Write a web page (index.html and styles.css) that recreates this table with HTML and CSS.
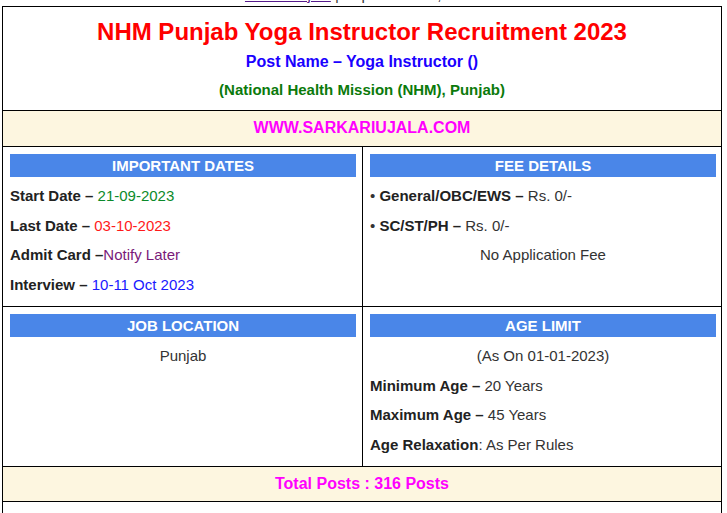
FILE: index.html
```html
<!DOCTYPE html>
<html>
<head>
<meta charset="utf-8">
<link rel="stylesheet" href="styles.css">
</head>
<body>
<div class="page">
  <div class="meta"><a href="#" class="meta-link">Sarkari Ujala</a> | September 20, 2023</div>
  <div class="grid">
    <div class="cell span head">
      <div class="title">NHM Punjab Yoga Instructor Recruitment 2023</div>
      <div class="subtitle">Post Name – Yoga Instructor ()</div>
      <div class="org">(National Health Mission (NHM), Punjab)</div>
    </div>
    <div class="cell span band site">WWW.SARKARIUJALA.COM</div>

    <div class="cell box">
      <div class="bar">IMPORTANT DATES</div>
      <div class="line"><b>Start Date – </b><span class="green">21-09-2023</span></div>
      <div class="line"><b>Last Date – </b><span class="red">03-10-2023</span></div>
      <div class="line"><b>Admit Card –</b><span class="purple">Notify Later</span></div>
      <div class="line"><b>Interview – </b><span class="blue">10-11 Oct 2023</span></div>
    </div>
    <div class="cell box box-r">
      <div class="bar">FEE DETAILS</div>
      <div class="line">• <b>General/OBC/EWS – </b>Rs. 0/-</div>
      <div class="line">• <b>SC/ST/PH – </b>Rs. 0/-</div>
      <div class="line center">No Application Fee</div>
    </div>

    <div class="cell box">
      <div class="bar">JOB LOCATION</div>
      <div class="line center">Punjab</div>
    </div>
    <div class="cell box box-r">
      <div class="bar">AGE LIMIT</div>
      <div class="line center">(As On 01-01-2023)</div>
      <div class="line"><b>Minimum Age – </b>20 Years</div>
      <div class="line"><b>Maximum Age – </b>45 Years</div>
      <div class="line"><b>Age Relaxation</b>: As Per Rules</div>
    </div>

    <div class="cell span band total">Total Posts : 316 Posts</div>
    <div class="cell span empty"></div>
  </div>
</div>
</body>
</html>
```

FILE: styles.css
```css
html, body {
  margin: 0;
  padding: 0;
  background: #fff;
}
body {
  font-family: "Liberation Sans", Arial, sans-serif;
  color: #333;
  font-size: 15px;
}
.page {
  padding: 0 5px 0 2px;
}
.meta {
  margin-top: -14px;
  margin-bottom: 2px;
  height: 18px;
  line-height: 18px;
  text-align: center;
  font-size: 15px;
  color: #333;
}
.meta-link {
  color: #551a8b;
  text-decoration: underline;
}
.grid {
  display: grid;
  grid-template-columns: 359px 358px;
  gap: 1px;
  background: #000;
  border: 1px solid #000;
  width: 718px;
}
.cell {
  background: #fff;
}
.span {
  grid-column: 1 / span 2;
}
.head {
  text-align: center;
  font-weight: bold;
  padding: 10px 0 7px;
}
.title {
  color: #ff0000;
  font-size: 24px;
  line-height: 30px;
}
.subtitle {
  color: #1a00ff;
  font-size: 16px;
  line-height: 29px;
}
.org {
  color: #0b7a0b;
  font-size: 15px;
  line-height: 27px;
}
.band {
  background: #fdf6e0;
  text-align: center;
  color: #ff00ff;
  font-weight: bold;
  font-size: 16px;
}
.site {
  line-height: 33px;
  padding-bottom: 2px;
}
.total {
  line-height: 33px;
  padding-bottom: 1px;
}
.empty {
  height: 40px;
}
.box {
  padding: 7px 6px 7px 7px;
}
.box-r {
  padding-right: 5px;
}
.bar {
  background: #4a86e8;
  color: #fff;
  font-weight: bold;
  font-size: 15px;
  line-height: 23px;
  height: 23px;
  text-align: center;
  margin-bottom: 4px;
}
.line {
  line-height: 29.5px;
  font-size: 15px;
  color: #333;
}
.line b {
  color: #222;
}
.center {
  text-align: center;
}
.green { color: #0b8a2a; }
.red { color: #ff1a1a; }
.purple { color: #7a1a7a; }
.blue { color: #1a1aff; }
```
